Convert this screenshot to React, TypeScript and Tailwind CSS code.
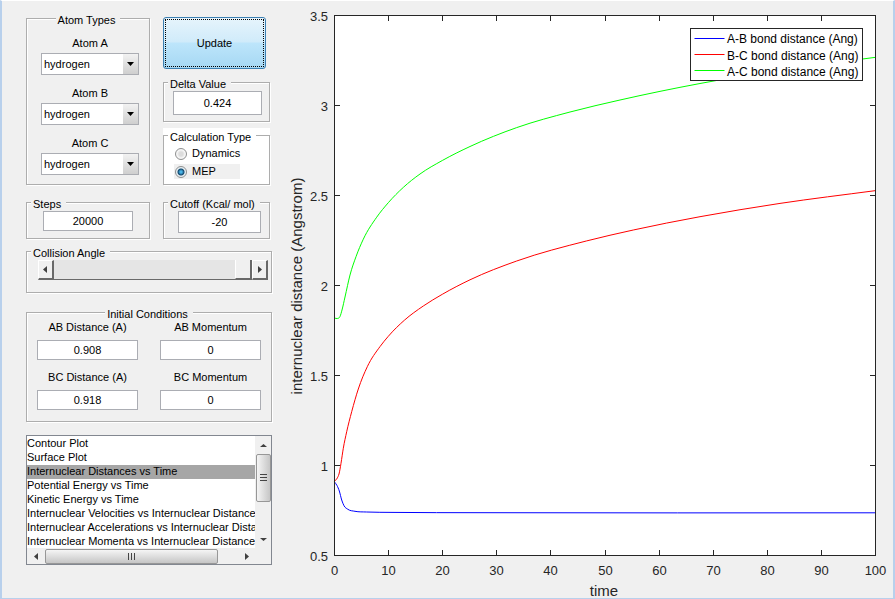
import React, { useState } from "react";

type Point = [number, number];

const ATOMS = ["hydrogen", "deuterium", "fluorine", "chlorine"];

const PLOTS = [
  "Contour Plot",
  "Surface Plot",
  "Internuclear Distances vs Time",
  "Potential Energy vs Time",
  "Kinetic Energy vs Time",
  "Internuclear Velocities vs Internuclear Distances",
  "Internuclear Accelerations vs Internuclear Distances",
  "Internuclear Momenta vs Internuclear Distance",
];

const AB: Point[] = [
  [334.5, 482], [337, 485.5], [339.3, 491], [341.7, 500], [344, 505.7], [347.7, 509.2],
  [355, 511.3], [366.7, 512], [393, 512.4], [480, 512.7], [875, 512.8],
];

const BC: Point[] = [
  [334.5, 481.3], [337.3, 478], [339, 474], [341, 463.3], [343.3, 448.3], [346.7, 431.7],
  [351.7, 411.7], [358.3, 389], [367.3, 366.7], [380, 346.6], [388.3, 336.3], [404.3, 320.3],
  [423.3, 306], [442.3, 294.3], [470, 279.8], [516.7, 261], [586.7, 240.9],
  [633.3, 230], [700, 216.7], [780, 203.4], [875, 190.7],
];

const AC: Point[] = [
  [334.5, 318], [337.3, 318.5], [340, 316.5], [342, 310], [345, 297], [350, 275],
  [356, 256.7], [363.3, 239.2], [376.7, 217.2], [388.3, 202.7], [403.3, 187.4], [420, 174],
  [442.3, 160.5], [470, 146.5], [516.7, 127.6], [570, 112], [620, 100],
  [700, 83.5], [780, 70], [875, 57.4],
];

/* Smooth spline through unevenly spaced samples, written as cubic Béziers. */
function curve(pts: Point[]) {
  const last = pts.length - 1;
  const slope = (i: number) => (pts[i + 1][1] - pts[i][1]) / (pts[i + 1][0] - pts[i][0]);
  const tangent = (i: number) => {
    if (i === 0) return slope(0);
    if (i === last) return slope(last - 1);
    const before = pts[i][0] - pts[i - 1][0];
    const after = pts[i + 1][0] - pts[i][0];
    return (slope(i - 1) * after + slope(i) * before) / (before + after);
  };
  let d = `M${pts[0][0]} ${pts[0][1]}`;
  for (let i = 0; i < last; i++) {
    const [x1, y1] = pts[i];
    const [x2, y2] = pts[i + 1];
    const third = (x2 - x1) / 3;
    d += `C${x1 + third} ${y1 + tangent(i) * third} ${x2 - third} ${y2 - tangent(i + 1) * third} ${x2} ${y2}`;
  }
  return d;
}

const SERIES = [
  { name: "A-B bond distance (Ang)", color: "#0000ff", points: AB },
  { name: "B-C bond distance (Ang)", color: "#ff0000", points: BC },
  { name: "A-C bond distance (Ang)", color: "#00ff00", points: AC },
];

const X_TICKS = [0, 10, 20, 30, 40, 50, 60, 70, 80, 90, 100];
const Y_TICKS = [0.5, 1, 1.5, 2, 2.5, 3, 3.5];
const px = (t: number) => Math.round(334 + t * 5.41) + 0.5;
const py = (v: number) => 555.5 - (v - 0.5) * 180;

function Chart() {
  return (
    <svg viewBox="288 1 605 597" className="h-auto w-full" role="img" aria-label="Internuclear distances vs time">
      <rect x="334.5" y="15.5" width="541" height="540" fill="#fff" />
      {SERIES.map((s) => (
        <path key={s.name} d={curve(s.points)} fill="none" stroke={s.color} strokeWidth="1" />
      ))}
      <g stroke="#262626" fill="none" strokeWidth="1">
        <rect x="334.5" y="15.5" width="541" height="540" />
        {X_TICKS.map((t) => (
          <path key={t} d={`M${px(t)} 555v-5M${px(t)} 16v5`} />
        ))}
        {Y_TICKS.map((v) => (
          <path key={v} d={`M335 ${py(v)}h5M875 ${py(v)}h-5`} />
        ))}
      </g>
      <g fill="#262626" fontSize="13">
        {X_TICKS.map((t) => (
          <text key={t} x={px(t)} y="575" textAnchor="middle">{t}</text>
        ))}
        {Y_TICKS.map((v) => (
          <text key={v} x="328" y={py(v) + 5.5} textAnchor="end">{v}</text>
        ))}
      </g>
      <g fill="#262626" fontSize="15" textAnchor="middle">
        <text x="604" y="596">time</text>
        <text transform="translate(302 286) rotate(-90)">internuclear distance (Angstrom)</text>
      </g>
      <rect x="690.5" y="28.5" width="172" height="52" fill="#fff" stroke="#262626" />
      {SERIES.map((s, i) => (
        <g key={s.name}>
          <path d={`M694.5 ${38.5 + i * 16}h30`} stroke={s.color} />
          <text x="727" y={43 + i * 16.5} fontSize="12" fill="#000">{s.name}</text>
        </g>
      ))}
    </svg>
  );
}

function GroupBox({ title, centered, white, className, children }: {
  title: string; centered?: boolean; white?: boolean; className: string; children: React.ReactNode;
}) {
  const bg = white ? "bg-white" : "bg-[#f0f0f0]";
  return (
    <div className={bg}>
      <fieldset className="min-w-0 border border-[#adadad] shadow-[1px_1px_0_#fff,inset_1px_1px_0_#fff]">
        <legend className={`${bg} pt-[3px] pr-[5px] pl-0.5 leading-3 whitespace-nowrap ${centered ? "mx-auto" : "ml-1"}`}>{title}</legend>
        <div className={`pt-px ${className}`}>{children}</div>
      </fieldset>
    </div>
  );
}

function AtomSelect({ id, label }: { id: string; label: string }) {
  return (
    <div className="flex flex-col gap-1">
      <label htmlFor={id} className="text-center leading-3">{label}</label>
      <div className="relative h-[22px]">
        <select id={id} className="h-full w-full appearance-none border border-[#abadb3] bg-white pl-0.5 outline-none">
          {ATOMS.map((a) => <option key={a}>{a}</option>)}
        </select>
        <span className="pointer-events-none absolute inset-y-px right-px flex w-[15px] items-center justify-center bg-linear-to-b from-[#f2f2f2] to-[#cfcfcf]">
          <svg width="7" height="4" viewBox="0 0 7 4" aria-hidden="true"><path d="M0 0h7L3.5 4z" /></svg>
        </span>
      </div>
    </div>
  );
}

const INPUT = "w-full min-w-0 border border-[#abadb3] bg-white text-center outline-none";

function Field({ id, label, value }: { id: string; label: string; value: string }) {
  return (
    <div className="flex flex-col gap-[7px]">
      <label htmlFor={id} className="text-center leading-3">{label}</label>
      <input id={id} defaultValue={value} className={`h-5 ${INPUT}`} />
    </div>
  );
}

function Radio({ label, checked, onChange }: { label: string; checked: boolean; onChange: () => void }) {
  return (
    <label className={`flex h-[15px] w-[66px] items-center gap-[5px] ${checked ? "bg-[#f0f0f0]" : ""}`}>
      <input
        type="radio"
        name="calculation"
        checked={checked}
        onChange={onChange}
        className="ml-px size-3 shrink-0 appearance-none rounded-full border border-[#8e8f8f] bg-[radial-gradient(circle,#dcdcdc_0_2px,#f6f6f6_4px)] checked:bg-[radial-gradient(circle,#49b5e8_0_1px,#12476d_3px,#e8f0f4_4px)]"
      />
      {label}
    </label>
  );
}

function Arrow({ d, className }: { d: string; className?: string }) {
  return <svg width="7" height="7" viewBox="0 0 7 7" className={className} aria-hidden="true"><path d={d} fill="#404040" /></svg>;
}

const LEFT = "M5 0v7L1 3.5z";
const RIGHT = "M2 0v7l4-3.5z";
const UP = "M0 5h7L3.5 2z";
const DOWN = "M0 2h7L3.5 5z";
const STEP = "flex h-full w-4 items-center justify-center border-t border-l border-r-2 border-b-2 border-t-white border-l-white border-r-[#696969] border-b-[#696969] bg-[#f0f0f0]";

function ListBox() {
  return (
    <div className="border border-[#828790] bg-[#f0f0f0]">
      <div className="flex h-28">
        <select
          size={8}
          aria-label="Plot type"
          defaultValue={PLOTS[2]}
          className="h-full min-w-0 flex-1 appearance-none overflow-hidden bg-white pt-px outline-none"
        >
          {PLOTS.map((p) => (
            <option key={p} className="h-3.5 min-h-0 p-0 leading-[14px] text-black checked:bg-[linear-gradient(#a6a6a6,#a6a6a6)] checked:text-black">
              {p}
            </option>
          ))}
        </select>
        <div className="flex w-4 flex-col items-center">
          <button aria-label="Scroll up" className="flex h-[18px] w-full items-center justify-center"><Arrow d={UP} /></button>
          <div className="flex h-12 w-[15px] items-center justify-center rounded-xs border border-[#979797] bg-linear-to-r from-[#f5f5f5] to-[#c6c6c6]">
            <svg width="7" height="8" viewBox="0 0 7 8" aria-hidden="true"><path d="M0 .5h7M0 3.5h7M0 6.5h7" stroke="#444" /></svg>
          </div>
          <button aria-label="Scroll down" className="mt-auto flex h-[18px] w-full items-center justify-center"><Arrow d={DOWN} /></button>
        </div>
      </div>
      <div className="flex h-4 items-center pr-4">
        <button aria-label="Scroll left" className="flex h-full w-[18px] items-center justify-center"><Arrow d={LEFT} /></button>
        <div className="flex h-[15px] w-[173px] items-center justify-center rounded-xs border border-[#979797] bg-linear-to-b from-[#f5f5f5] to-[#c6c6c6]">
          <svg width="8" height="7" viewBox="0 0 8 7" aria-hidden="true"><path d="M.5 0v7M3.5 0v7M6.5 0v7" stroke="#444" /></svg>
        </div>
        <button aria-label="Scroll right" className="ml-auto flex h-full w-[18px] items-center justify-center"><Arrow d={RIGHT} /></button>
      </div>
    </div>
  );
}

export default function App() {
  const [mode, setMode] = useState("MEP");
  const [angle, setAngle] = useState(180);

  return (
    <div className="flex min-h-screen gap-4 border-x-2 border-t border-b border-[#b8d0ec] border-t-white bg-[#f0f0f0] pl-6 font-['Liberation_Sans',Arial,sans-serif] text-[11px] text-black">
      <aside className="flex w-[246px] shrink-0 flex-col pt-2.5">
        <div className="flex gap-[13px]">
          <div className="w-[124px]">
            <GroupBox title="Atom Types" centered className="pr-2.5 pb-[9px] pl-3.5">
              <div className="flex flex-col gap-3 pt-2.5">
                <AtomSelect id="atom-a" label="Atom A" />
                <AtomSelect id="atom-b" label="Atom B" />
                <AtomSelect id="atom-c" label="Atom C" />
              </div>
            </GroupBox>
          </div>
          <div className="flex w-[107px] flex-col gap-1.5 pt-1.5">
            <button className="mr-1 h-[52px] rounded-[3px] border border-[#3c7fb1] bg-[linear-gradient(#e6f4fc,#d0ebfa_48%,#bde5fb_50%,#a6d8f3)] p-px">
              <span className="flex h-full items-center justify-center border border-dotted border-black">Update</span>
            </button>
            <GroupBox title="Delta Value" className="pr-[7px] pb-1.5 pl-[9px]">
              <input aria-label="Delta Value" defaultValue="0.424" className={`block h-6 ${INPUT}`} />
            </GroupBox>
            <GroupBox title="Calculation Type" white className="pb-[5px] pl-2.5">
              <div className="flex flex-col gap-[3px] pt-0.5">
                <Radio label="Dynamics" checked={mode === "Dynamics"} onChange={() => setMode("Dynamics")} />
                <Radio label="MEP" checked={mode === "MEP"} onChange={() => setMode("MEP")} />
              </div>
            </GroupBox>
          </div>
        </div>

        <div className="mt-2.5 flex gap-[13px]">
          <div className="w-[124px]">
            <GroupBox title="Steps" className="px-4 pb-[7px]">
              <input aria-label="Steps" defaultValue="20000" className={`block h-5 ${INPUT}`} />
            </GroupBox>
          </div>
          <div className="w-[107px]">
            <GroupBox title="Cutoff (Kcal/ mol)" className="pr-2 pb-[5px] pl-3.5">
              <input aria-label="Cutoff (Kcal/ mol)" defaultValue="-20" className={`block h-[22px] ${INPUT}`} />
            </GroupBox>
          </div>
        </div>

        <div className="mt-[5px]">
          <GroupBox title="Collision Angle" className="pr-[3px] pb-3 pl-[11px]">
            <div className="flex h-5">
              <button aria-label="Decrease angle" onClick={() => setAngle(Math.max(0, angle - 1))} className={STEP}>
                <Arrow d={LEFT} className="shrink-0" />
              </button>
              <input
                type="range"
                aria-label="Collision Angle"
                min={0}
                max={180}
                value={angle}
                onChange={(e) => setAngle(Number(e.target.value))}
                className="h-full min-w-0 flex-1 appearance-none border-b border-[#696969] bg-[#e5e5e5] outline-none [&::-webkit-slider-thumb]:h-[19px] [&::-webkit-slider-thumb]:w-[17px] [&::-webkit-slider-thumb]:appearance-none [&::-webkit-slider-thumb]:border-r-2 [&::-webkit-slider-thumb]:border-b [&::-webkit-slider-thumb]:border-l [&::-webkit-slider-thumb]:border-[#696969] [&::-webkit-slider-thumb]:border-l-white [&::-webkit-slider-thumb]:bg-[#f0f0f0]"
              />
              <button aria-label="Increase angle" onClick={() => setAngle(Math.min(180, angle + 1))} className={STEP}>
                <Arrow d={RIGHT} className="shrink-0" />
              </button>
            </div>
          </GroupBox>
        </div>

        <div className="mt-3">
          <GroupBox title="Initial Conditions" centered className="px-2.5 pb-[11px]">
            <div className="grid grid-cols-2 gap-x-[22px] gap-y-[11px]">
              <Field id="ab-distance" label="AB Distance (A)" value="0.908" />
              <Field id="ab-momentum" label="AB Momentum" value="0" />
              <Field id="bc-distance" label="BC Distance (A)" value="0.918" />
              <Field id="bc-momentum" label="BC Momentum" value="0" />
            </div>
          </GroupBox>
        </div>

        <div className="mt-[13px]">
          <ListBox />
        </div>
      </aside>

      <main className="min-w-0 flex-1">
        <Chart />
      </main>
    </div>
  );
}
